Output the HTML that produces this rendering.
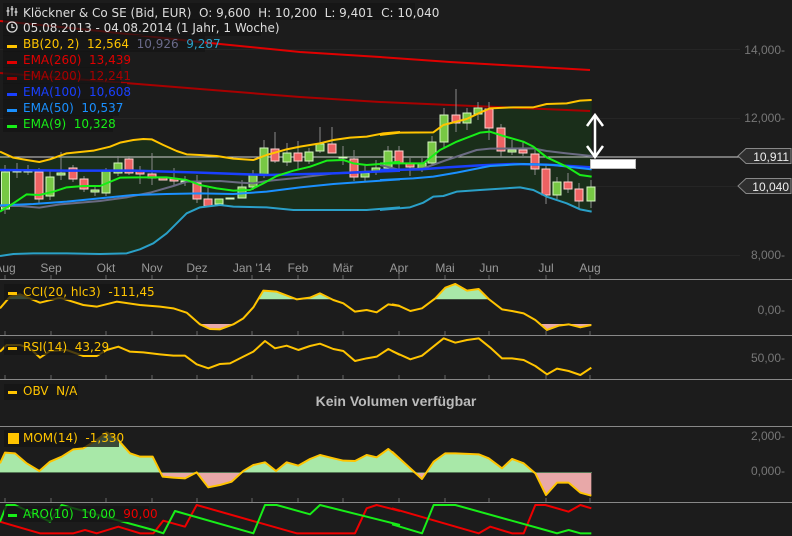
<!DOCTYPE html>
<html><head><meta charset="utf-8"><style>
body{margin:0;background:#1c1c1c;width:792px;height:536px;overflow:hidden;font-family:"Liberation Sans",sans-serif}
svg{display:block}
text{font-family:"Liberation Sans",sans-serif;white-space:pre}
.lg text{font-family:"DejaVu Sans","Liberation Sans",sans-serif}
</style></head><body>
<svg width="792" height="536" viewBox="0 0 792 536" xmlns="http://www.w3.org/2000/svg" xml:space="preserve">
<rect width="792" height="536" fill="#1c1c1c"/>
<g stroke="#252525" stroke-width="1">
<line x1="0" y1="49.5" x2="740" y2="49.5"/><line x1="0" y1="118.5" x2="740" y2="118.5"/><line x1="0" y1="186.5" x2="740" y2="186.5"/><line x1="0" y1="255.5" x2="740" y2="255.5"/>
</g>
<g transform="translate(0,100) scale(0.33333)">
<polygon fill="#1a2e1a" points="0,155 40,173 80,180 118,186 150,178 200,160 280,152 330,140 360,128 400,120 430,117 455,118 490,135 530,153 560,163 600,165 650,168 700,176 760,180 800,165 860,148 900,140 960,130 1000,120 1050,113 1100,110 1150,100 1200,96 1200,322 1100,330 1000,330 880,330 800,322 700,320 660,315 600,322 560,340 530,370 500,400 460,430 420,448 380,460 300,462 200,460 100,460 40,462 0,468"/>
</g>
<g transform="translate(380,80) scale(0.33333)">
<polygon fill="#1a2e1a" points="0,165 60,158 160,157 190,135 260,117 300,98 330,85 400,82 460,82 500,72 560,70 600,62 635,60 635,395 600,388 560,370 500,350 460,330 420,322 300,330 230,335 190,348 160,350 130,368 90,382 0,390"/>
</g>
<polyline fill="none" stroke="#e00000" stroke-width="2" points="0,21 100,31 200,42 300,52 380,57 450,62 520,66 590,70"/>
<polyline fill="none" stroke="#a80000" stroke-width="2" points="0,73 100,81 200,89 300,97 380,102 450,105 520,108 590,111"/>
<line x1="0" y1="157" x2="740" y2="157" stroke="#cfcfcf" stroke-width="1"/>
<g stroke="#8a8a8a" stroke-width="1">
<line x1="5" y1="165" x2="5" y2="214"/><line x1="17" y1="163" x2="17" y2="178"/><line x1="28" y1="165" x2="28" y2="175"/><line x1="39" y1="168" x2="39" y2="203"/><line x1="50" y1="170" x2="50" y2="200"/><line x1="61" y1="152" x2="61" y2="180"/><line x1="73" y1="165" x2="73" y2="182"/><line x1="84" y1="176" x2="84" y2="192"/><line x1="95" y1="186" x2="95" y2="196"/><line x1="106" y1="168" x2="106" y2="196"/><line x1="118" y1="156" x2="118" y2="176"/><line x1="129" y1="156" x2="129" y2="175"/><line x1="140" y1="166" x2="140" y2="184"/><line x1="152" y1="153" x2="152" y2="185"/><line x1="174" y1="168" x2="174" y2="185"/><line x1="185" y1="176" x2="185" y2="186"/><line x1="197" y1="175" x2="197" y2="203"/><line x1="208" y1="188" x2="208" y2="206"/><line x1="242" y1="180" x2="242" y2="198"/><line x1="253" y1="170" x2="253" y2="190"/><line x1="264" y1="140" x2="264" y2="178"/><line x1="275" y1="132" x2="275" y2="163"/><line x1="287" y1="143" x2="287" y2="166"/><line x1="298" y1="141" x2="298" y2="170"/><line x1="309" y1="148" x2="309" y2="164"/><line x1="320" y1="127" x2="320" y2="153"/><line x1="332" y1="127" x2="332" y2="153"/><line x1="343" y1="146" x2="343" y2="165"/><line x1="354" y1="150" x2="354" y2="181"/><line x1="365" y1="165" x2="365" y2="182"/><line x1="376" y1="160" x2="376" y2="175"/><line x1="388" y1="146" x2="388" y2="168"/><line x1="399" y1="146" x2="399" y2="169"/><line x1="410" y1="158" x2="410" y2="176"/><line x1="422" y1="158" x2="422" y2="172"/><line x1="432" y1="136" x2="432" y2="165"/><line x1="444" y1="108" x2="444" y2="149"/><line x1="456" y1="89" x2="456" y2="132"/><line x1="467" y1="108" x2="467" y2="130"/><line x1="478" y1="102" x2="478" y2="120"/><line x1="489" y1="102" x2="489" y2="140"/><line x1="501" y1="124" x2="501" y2="157"/><line x1="512" y1="140" x2="512" y2="155"/><line x1="523" y1="141" x2="523" y2="156"/><line x1="535" y1="150" x2="535" y2="175"/><line x1="546" y1="165" x2="546" y2="204"/><line x1="557" y1="177" x2="557" y2="199"/><line x1="568" y1="173" x2="568" y2="193"/><line x1="579" y1="183" x2="579" y2="209"/><line x1="591" y1="180" x2="591" y2="208"/>
</g>
<g stroke-width="1">
<g fill="#77c844" stroke="#d6f5c0">
<rect x="1.5" y="172" width="8" height="37"/><rect x="46" y="177" width="8" height="19"/><rect x="57" y="173" width="8" height="2"/><rect x="91" y="190" width="8" height="2"/><rect x="102" y="171" width="8" height="22"/><rect x="114" y="163" width="8" height="10"/><rect x="215" y="199" width="8" height="5"/><rect x="238" y="187" width="8" height="11"/><rect x="249" y="175" width="8" height="12"/><rect x="260" y="148" width="8" height="27"/><rect x="283" y="153" width="8" height="9"/><rect x="305" y="152" width="8" height="9"/><rect x="316" y="144" width="8" height="7"/><rect x="361" y="173" width="8" height="4"/><rect x="372" y="168" width="8" height="3"/><rect x="384" y="151" width="8" height="17"/><rect x="418" y="163" width="8" height="6"/><rect x="428" y="142" width="8" height="21"/><rect x="440" y="115" width="8" height="27"/><rect x="463" y="113" width="8" height="10"/><rect x="474" y="108" width="8" height="6"/><rect x="508" y="150" width="8" height="2"/><rect x="553" y="182" width="8" height="13"/><rect x="587" y="187" width="8" height="14"/>
</g>
<g fill="#ee6262" stroke="#ffd0d0">
<rect x="35" y="172" width="8" height="27"/><rect x="69" y="168" width="8" height="11"/><rect x="80" y="179" width="8" height="10"/><rect x="125" y="159" width="8" height="14"/><rect x="136" y="171" width="8" height="3"/><rect x="148" y="174" width="8" height="4"/><rect x="159" y="178" width="8" height="2"/><rect x="170" y="179" width="8" height="2"/><rect x="193" y="183" width="8" height="16"/><rect x="204" y="199" width="8" height="7"/><rect x="271" y="149" width="8" height="12"/><rect x="294" y="153" width="8" height="8"/><rect x="328" y="144" width="8" height="9"/><rect x="350" y="159" width="8" height="18"/><rect x="395" y="151" width="8" height="12"/><rect x="406" y="163" width="8" height="4"/><rect x="452" y="115" width="8" height="8"/><rect x="485" y="109" width="8" height="19"/><rect x="497" y="128" width="8" height="23"/><rect x="519" y="150" width="8" height="3"/><rect x="531" y="154" width="8" height="15"/><rect x="542" y="169" width="8" height="26"/><rect x="564" y="182" width="8" height="7"/><rect x="575" y="189" width="8" height="12"/>
</g>
<g fill="#d6f5c0" stroke="#d6f5c0"><rect x="13" y="171" width="8" height="1"/><rect x="24" y="171" width="8" height="1"/><rect x="181" y="181" width="8" height="1"/><rect x="226" y="198" width="8" height="1"/><rect x="339" y="157" width="8" height="1"/></g>
</g>
<g transform="translate(0,100) scale(0.33333)" fill="none" stroke-linejoin="round">
<polyline vector-effect="non-scaling-stroke" stroke="#6a6a82" stroke-width="2" points="0,318 60,318 118,323 180,313 300,303 380,292 450,278 520,258 560,245 660,243 720,248 760,250 800,243 900,233 1000,220 1100,215 1200,213"/>
<polyline vector-effect="non-scaling-stroke" stroke="#2aa0c8" stroke-width="2" points="0,468 40,462 100,460 200,460 300,462 380,460 420,448 460,430 500,400 530,370 560,340 600,322 660,315 700,320 800,322 880,330 1000,330 1100,330 1200,322"/>
<polyline vector-effect="non-scaling-stroke" stroke="#ffc400" stroke-width="2" points="0,155 40,173 80,180 118,186 150,178 200,160 280,152 330,140 360,128 400,120 430,117 455,118 490,135 530,153 560,163 600,165 650,168 700,176 760,180 800,165 860,148 900,140 960,130 1000,120 1050,113 1100,110 1150,100 1200,96"/>
<polyline vector-effect="non-scaling-stroke" stroke="#1a40ff" stroke-width="2.5" points="0,210 200,212 400,212 600,218 800,225 1000,220 1200,212"/>
<polyline vector-effect="non-scaling-stroke" stroke="#1a90ff" stroke-width="2" points="0,316 100,312 200,305 400,285 500,282 600,280 700,282 800,275 900,262 1000,252 1100,245 1200,238"/>
<polyline vector-effect="non-scaling-stroke" stroke="#18ee18" stroke-width="2" points="0,335 40,310 80,283 118,285 160,275 200,262 250,258 300,258 360,233 420,232 500,232 560,240 600,255 650,265 700,272 750,270 790,250 830,228 880,212 930,200 980,182 1030,180 1060,190 1100,195 1140,192 1200,185"/>
</g>
<g transform="translate(380,80) scale(0.33333)" fill="none" stroke-linejoin="round">
<polyline vector-effect="non-scaling-stroke" stroke="#6a6a82" stroke-width="2" points="0,255 60,270 130,265 200,240 290,210 330,206 460,205 500,213 560,220 635,228"/>
<polyline vector-effect="non-scaling-stroke" stroke="#2aa0c8" stroke-width="2" points="0,390 90,382 130,368 160,350 190,348 230,335 300,330 420,322 460,330 500,350 560,370 600,388 635,395"/>
<polyline vector-effect="non-scaling-stroke" stroke="#ffc400" stroke-width="2" points="0,165 60,158 160,157 190,135 260,117 300,98 330,85 400,82 460,82 500,72 560,70 600,62 635,60"/>
<polyline vector-effect="non-scaling-stroke" stroke="#1a40ff" stroke-width="2.5" points="0,270 120,268 200,262 300,256 400,252 500,254 635,262"/>
<polyline vector-effect="non-scaling-stroke" stroke="#1a90ff" stroke-width="2" points="0,300 100,295 160,290 230,278 330,258 430,252 520,255 635,268"/>
<polyline vector-effect="non-scaling-stroke" stroke="#18ee18" stroke-width="2" points="0,250 60,250 130,250 180,210 230,185 300,158 330,155 370,168 430,185 460,200 500,232 560,260 600,285 635,290"/>
</g>
<g stroke="#fff" stroke-width="2.5" fill="none"><line x1="595" y1="115" x2="595" y2="157"/><polyline points="587,126 595,115 603,126"/><polyline points="587,146 595,157 603,146"/></g>
<rect x="590.5" y="159.5" width="45" height="9" fill="#fff" stroke="#bbb"/>
<g fill="#2e2e2e" stroke="#888"><polygon points="738,156 746,148.5 791,148.5 791,163.5 746,163.5"/><polygon points="738,186 746,178.5 791,178.5 791,193.5 746,193.5"/></g>
<g font-size="12" fill="#eee" text-anchor="end"><text x="789" y="161">10,911</text><text x="789" y="191">10,040</text></g>
<g font-size="12" fill="#777" text-anchor="end"><text x="785" y="54">14,000-</text><text x="785" y="122">12,000-</text><text x="785" y="259">8,000-</text><text x="785" y="314">0,00-</text><text x="785" y="362">50,00-</text><text x="785" y="440">2,000-</text><text x="785" y="475">0,000-</text></g>
<g font-size="12" fill="#999" text-anchor="middle"><text x="5" y="272">Aug</text><text x="51" y="272">Sep</text><text x="106" y="272">Okt</text><text x="152" y="272">Nov</text><text x="197" y="272">Dez</text><text x="252" y="272">Jan '14</text><text x="298" y="272">Feb</text><text x="343" y="272">Mär</text><text x="399" y="272">Apr</text><text x="445" y="272">Mai</text><text x="489" y="272">Jun</text><text x="546" y="272">Jul</text><text x="590" y="272">Aug</text></g>
<g stroke="#888" stroke-width="1"><line x1="0" y1="279.5" x2="792" y2="279.5"/><line x1="0" y1="335.5" x2="792" y2="335.5"/><line x1="0" y1="379.5" x2="792" y2="379.5"/><line x1="0" y1="426.5" x2="792" y2="426.5"/><line x1="0" y1="502.5" x2="792" y2="502.5"/></g>
<g stroke="#666" stroke-width="1">
<path d="M5,275v4M51,275v4M106,275v4M152,275v4M197,275v4M252,275v4M298,275v4M343,275v4M399,275v4M445,275v4M489,275v4M546,275v4M590,275v4"/>
<path d="M5,331v4M51,331v4M106,331v4M152,331v4M197,331v4M252,331v4M298,331v4M343,331v4M399,331v4M445,331v4M489,331v4M546,331v4M590,331v4"/>
<path d="M5,375v4M51,375v4M106,375v4M152,375v4M197,375v4M252,375v4M298,375v4M343,375v4M399,375v4M445,375v4M489,375v4M546,375v4M590,375v4"/>
<path d="M5,498v4M51,498v4M106,498v4M152,498v4M197,498v4M252,498v4M298,498v4M343,498v4M399,498v4M445,498v4M489,498v4M546,498v4M590,498v4"/>
</g>
<defs>
<clipPath id="cciG"><rect x="0" y="280" width="600" height="19.3"/></clipPath>
<clipPath id="cciR"><rect x="0" y="324" width="600" height="11"/></clipPath>
<clipPath id="momG"><rect x="0" y="427" width="600" height="45.3"/></clipPath>
<clipPath id="momR"><rect x="0" y="472.3" width="600" height="30"/></clipPath>
</defs>
<g clip-path="url(#cciG)" fill="#a8e8a8">
<polygon transform="translate(0,275) scale(0.33333)" points="0,100 30,65 60,58 120,83 180,68 250,90 290,95 350,80 420,90 480,95 520,100 560,113 600,148 630,162 660,163 700,148 730,130 760,97 790,47 830,50 890,73 930,68 960,55 1000,75 1030,85 1065,110 1100,105 1130,112 1165,88 1200,93 1200,74 0,74"/>
<polygon transform="translate(392,275) scale(0.33333)" points="0,88 20,92 55,108 90,100 130,70 160,38 190,27 225,47 260,42 290,72 330,103 360,108 395,115 430,135 465,165 500,152 530,148 565,157 598,150 598,74 0,74"/>
</g>
<g clip-path="url(#cciR)" fill="#e8a8a8">
<polygon transform="translate(0,275) scale(0.33333)" points="520,100 560,113 600,148 630,162 660,163 700,148 730,130 760,97 760,140 520,140"/>
<polygon transform="translate(392,275) scale(0.33333)" points="395,115 430,135 465,165 500,152 530,148 565,157 598,150 598,140 395,140"/>
</g>
<g fill="none" stroke="#ffc400" stroke-linejoin="round">
<polyline vector-effect="non-scaling-stroke" stroke-width="2" transform="translate(0,275) scale(0.33333)" points="0,100 30,65 60,58 120,83 180,68 250,90 290,95 350,80 420,90 480,95 520,100 560,113 600,148 630,162 660,163 700,148 730,130 760,97 790,47 830,50 890,73 930,68 960,55 1000,75 1030,85 1065,110 1100,105 1130,112 1165,88 1200,93"/>
<polyline vector-effect="non-scaling-stroke" stroke-width="2" transform="translate(392,275) scale(0.33333)" points="0,88 20,92 55,108 90,100 130,70 160,38 190,27 225,47 260,42 290,72 330,103 360,108 395,115 430,135 465,165 500,152 530,148 565,157 598,150"/>
<polyline vector-effect="non-scaling-stroke" stroke-width="2" transform="translate(0,275) scale(0.33333)" points="0,230 20,210 60,210 90,220 120,248 150,228 200,225 250,243 290,243 320,225 355,215 390,230 430,232 480,238 520,242 555,242 590,268 625,280 660,267 690,265 730,245 760,230 795,198 825,220 860,212 895,225 930,213 960,206 1000,222 1030,228 1065,258 1100,250 1130,245 1165,222 1200,240"/>
<polyline vector-effect="non-scaling-stroke" stroke-width="2" transform="translate(392,275) scale(0.33333)" points="0,228 55,253 90,242 155,190 190,203 225,195 260,190 295,218 330,250 360,250 395,255 430,273 465,298 495,281 530,288 565,300 598,278"/>
</g>
<g clip-path="url(#momG)" fill="#a8e8a8">
<polygon transform="translate(0,275) scale(0.33333)" points="0,565 15,533 45,535 80,565 118,588 150,560 185,545 220,523 250,520 290,495 320,472 350,490 390,535 420,545 458,545 488,605 520,608 555,610 590,592 625,637 660,630 695,620 730,588 760,570 795,562 828,588 860,562 895,572 930,552 960,540 1000,550 1030,557 1065,558 1100,540 1130,547 1165,522 1200,552 1200,592 0,592"/>
<polygon transform="translate(392,275) scale(0.33333)" points="0,530 55,580 90,612 125,560 160,535 190,535 260,538 290,550 330,580 360,552 395,565 430,595 430,592 0,592"/>
</g>
<g clip-path="url(#momR)" fill="#e8a8a8">
<polygon transform="translate(0,275) scale(0.33333)" points="458,545 488,605 520,608 555,610 590,592 625,637 660,630 695,620 730,588 730,592 458,592"/>
<polygon transform="translate(392,275) scale(0.33333)" points="55,580 90,612 125,560 125,592 55,592"/>
<polygon transform="translate(392,275) scale(0.33333)" points="420,590 430,595 462,660 495,623 530,623 565,653 598,662 598,592 420,592"/>
</g>
<line x1="0" y1="472.5" x2="592" y2="472.5" stroke="#557755" stroke-width="1"/>
<g fill="none" stroke="#ffc400" stroke-linejoin="round">
<polyline vector-effect="non-scaling-stroke" stroke-width="2" transform="translate(0,275) scale(0.33333)" points="0,565 15,533 45,535 80,565 118,588 150,560 185,545 220,523 250,520 290,495 320,472 350,490 390,535 420,545 458,545 488,605 520,608 555,610 590,592 625,637 660,630 695,620 730,588 760,570 795,562 828,588 860,562 895,572 930,552 960,540 1000,550 1030,557 1065,558 1100,540 1130,547 1165,522 1200,552"/>
<polyline vector-effect="non-scaling-stroke" stroke-width="2" transform="translate(392,275) scale(0.33333)" points="0,530 55,580 90,612 125,560 160,535 190,535 260,538 290,550 330,580 360,552 395,565 430,595 462,660 495,623 530,623 565,653 598,662"/>
</g>
<g fill="none" stroke-width="2" stroke-linejoin="round">
<polyline vector-effect="non-scaling-stroke" stroke="#ee0000" transform="translate(0,275) scale(0.33333)" points="0,740 120,775 220,775 255,765 290,775 355,755 420,775 460,775 490,737 555,755 590,690 890,775 1065,775 1100,700 1130,690 1200,708"/>
<polyline vector-effect="non-scaling-stroke" stroke="#ee0000" transform="translate(392,275) scale(0.33333)" points="0,700 260,775 295,755 360,775 395,775 430,690 460,690 530,710 565,690 598,700"/>
<polyline vector-effect="non-scaling-stroke" stroke="#18ee18" transform="translate(0,275) scale(0.33333)" points="0,740 20,690 45,690 150,740 185,690 460,765 490,775 525,708 760,775 795,690 830,690 930,718 960,690 1200,750"/>
<polyline vector-effect="non-scaling-stroke" stroke="#18ee18" transform="translate(392,275) scale(0.33333)" points="0,748 90,775 125,690 190,690 460,765 495,775 530,765 565,775 598,775"/>
</g>
<text x="396" y="406" font-size="14" font-weight="bold" fill="#bbbbbb" text-anchor="middle">Kein Volumen verfügbar</text>
<g fill="#141414" fill-opacity="0.75">
<rect x="3" y="3" width="412" height="17"/><rect x="3" y="19" width="258" height="17"/><rect x="3" y="35" width="202" height="17"/><rect x="3" y="51" width="118" height="17"/><rect x="3" y="67" width="118" height="17"/><rect x="3" y="83" width="124" height="17"/><rect x="3" y="99" width="116" height="17"/><rect x="3" y="115" width="110" height="17"/>
<rect x="4" y="284" width="144" height="16"/><rect x="4" y="339" width="100" height="16"/><rect x="4" y="384" width="74" height="16"/><rect x="4" y="430" width="115" height="17"/><rect x="4" y="506" width="145" height="16"/>
</g>
<g font-size="12" class="lg">
<text x="23" y="17" fill="#ddd">Klöckner &amp; Co SE (Bid, EUR)  O: 9,600  H: 10,200  L: 9,401  C: 10,040</text>
<text x="23" y="32" fill="#ddd">05.08.2013 - 04.08.2014 (1 Jahr, 1 Woche)</text>
<text x="23" y="48" fill="#ffc400">BB(20, 2)  12,564  <tspan fill="#6a6a8a">10,926</tspan>  <tspan fill="#2aa0c8">9,287</tspan></text>
<text x="23" y="64" fill="#e00000">EMA(260)  13,439</text>
<text x="23" y="80" fill="#a80000">EMA(200)  12,241</text>
<text x="23" y="96" fill="#1a40ff">EMA(100)  10,608</text>
<text x="23" y="112" fill="#1a90ff">EMA(50)  10,537</text>
<text x="23" y="128" fill="#18ee18">EMA(9)  10,328</text>
<text x="23" y="296" fill="#ffc400">CCI(20, hlc3)  -111,45</text>
<text x="23" y="351" fill="#ffc400">RSI(14)  43,29</text>
<text x="23" y="395" fill="#ffc400">OBV  N/A</text>
<text x="23" y="442" fill="#ffc400">MOM(14)  -1,330</text>
<text x="23" y="518" fill="#18ee18">ARO(10)  10,00  <tspan fill="#ee0000">90,00</tspan></text>
</g>
<g>
<rect x="7" y="45" width="10" height="3" fill="#ffc400"/><rect x="7" y="61" width="10" height="3" fill="#e00000"/><rect x="7" y="77" width="10" height="3" fill="#a80000"/><rect x="7" y="93" width="10" height="3" fill="#1a40ff"/><rect x="7" y="109" width="10" height="3" fill="#1a90ff"/><rect x="7" y="125" width="10" height="3" fill="#18ee18"/>
<rect x="8" y="292" width="9" height="3" fill="#ffc400"/><rect x="8" y="347" width="9" height="3" fill="#ffc400"/><rect x="8" y="391" width="9" height="3" fill="#ffc400"/><rect x="8" y="433" width="11" height="11" fill="#ffc400"/><rect x="8" y="514" width="9" height="3" fill="#18ee18"/>
</g>
<g stroke="#ddd" stroke-width="1.2" fill="none"><path d="M8,7v9M12,6v10M16,8v8"/><path d="M6.5,11h3M10.5,9h3M14.5,12h3"/></g>
<g stroke="#ddd" stroke-width="1.3" fill="none"><circle cx="12" cy="27" r="5"/><path d="M12,24v3.5h2.5"/></g>
</svg>
</body></html>
